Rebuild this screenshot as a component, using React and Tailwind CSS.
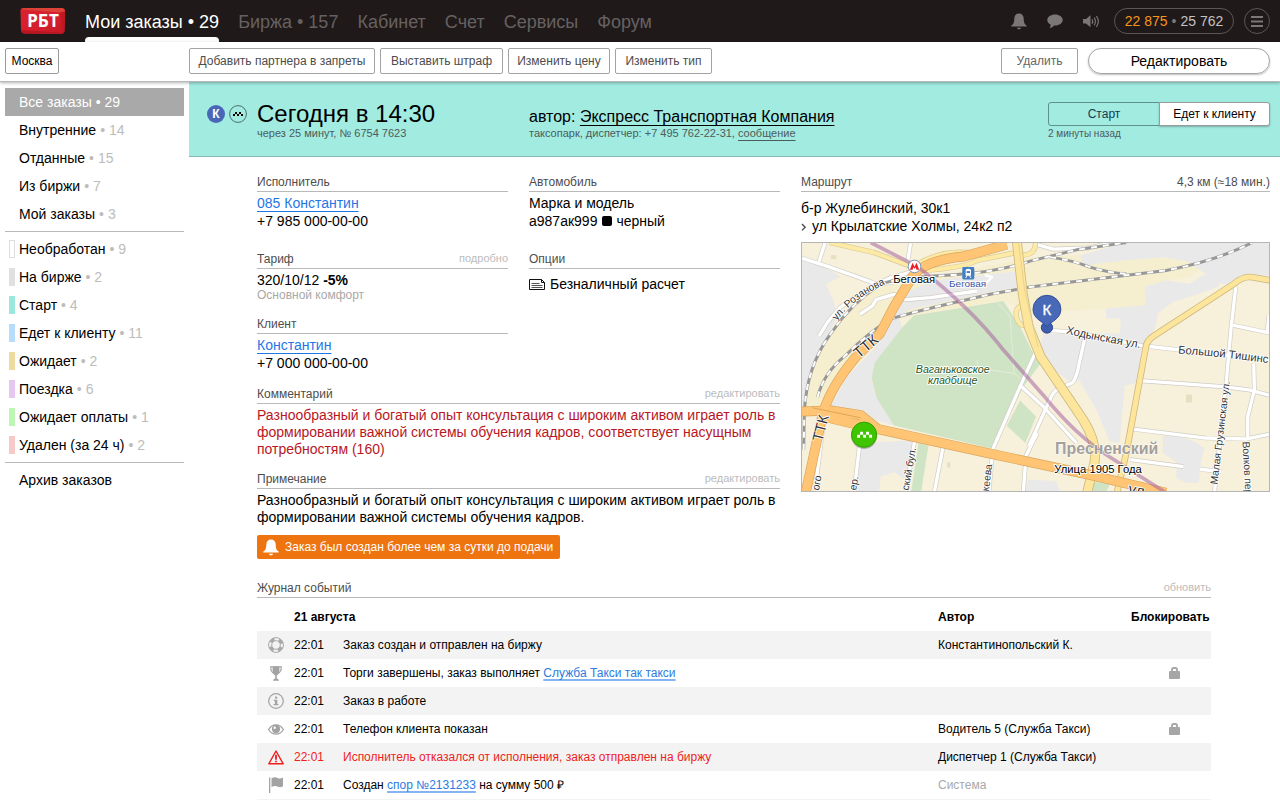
import { useState } from 'react'
import clsx from 'clsx'

const NAV = ['Мои заказы • 29', 'Биржа • 157', 'Кабинет', 'Счет', 'Сервисы', 'Форум']

const ACTIONS = [
  { label: 'Добавить партнера в запреты', width: 'w-[186px]' },
  { label: 'Выставить штраф', width: 'w-[123px]' },
  { label: 'Изменить цену', width: 'w-[102px]' },
  { label: 'Изменить тип', width: 'w-[97px]' },
]

const FOLDERS = [
  { label: 'Все заказы', count: 29 },
  { label: 'Внутренние', count: 14 },
  { label: 'Отданные', count: 15 },
  { label: 'Из биржи', count: 7 },
  { label: 'Мой заказы', count: 3 },
]

const STATUSES = [
  { label: 'Необработан', count: 9, color: 'border border-[#dedede] bg-white' },
  { label: 'На бирже', count: 2, color: 'bg-[#e0e0e0]' },
  { label: 'Старт', count: 4, color: 'bg-[#9de8de]' },
  { label: 'Едет к клиенту', count: 11, color: 'bg-[#b8dcfc]' },
  { label: 'Ожидает', count: 2, color: 'bg-[#eddb9f]' },
  { label: 'Поездка', count: 6, color: 'bg-[#e6c7f2]' },
  { label: 'Ожидает оплаты', count: 1, color: 'bg-[#bdf7b4]' },
  { label: 'Удален (за 24 ч)', count: 2, color: 'bg-[#f8c9c9]' },
]

const LOG_LINK = 'text-[#2b7be0] underline decoration-[#86b4f2] decoration-2 underline-offset-[2px] [text-decoration-skip-ink:none]'

const EVENTS = [
  { icon: LifebuoyIcon, text: 'Заказ создан и отправлен на биржу', author: 'Константинопольский К.' },
  {
    icon: CupIcon,
    text: <>Торги завершены, заказ выполняет <a href="#service" className={LOG_LINK}>Служба Такси так такси</a></>,
    lock: true,
  },
  { icon: InfoIcon, text: 'Заказ в работе' },
  { icon: EyeIcon, text: 'Телефон клиента показан', author: 'Водитель 5 (Служба Такси)', lock: true },
  {
    icon: WarningIcon,
    text: 'Исполнитель отказался от исполнения, заказ отправлен на биржу',
    author: 'Диспетчер 1 (Служба Такси)',
    danger: true,
  },
  {
    icon: FlagIcon,
    text: <>Создан <a href="#dispute" className={LOG_LINK}>спор №2131233</a> на сумму 500 ₽</>,
    author: 'Система',
    system: true,
  },
]

/* ---------- icons ---------- */

function Logo() {
  return (
    <svg width="46" height="28" viewBox="0 0 46 28" aria-label="РБТ">
      <defs>
        <linearGradient id="logoRed" x1="0" y1="0" x2="1" y2="1">
          <stop offset="0" stopColor="#d8232f" />
          <stop offset="0.6" stopColor="#d51f2c" />
          <stop offset="1" stopColor="#c21824" />
        </linearGradient>
      </defs>
      <path d="M.5 3Q.5 1 3 1L41 1Q45 1 45 4L44.500 24Q44 27 40 27L5 26.500Q1 26.500 1 23Z" fill="url(#logoRed)" />
      <path d="M3 1L41 1Q45 1 45 4.500L40 5.500L2 2.500Z" fill="#dc4238" />
      <path d="M40 5.500L45 4.500L44.500 24Q44 27 40 27L42 23Z" fill="#c01823" />
      <path d="M1 23L41 25.500L40 27L5 26.500Q1.500 26.500 1 23Z" fill="#b81622" />
      <text x="23" y="20" textAnchor="middle" fontSize="17" fontWeight="700" fill="#fff" fontFamily="Noto Sans, sans-serif">РБТ</text>
    </svg>
  )
}

function BellIcon({ className }) {
  return (
    <svg width="16" height="17" viewBox="0 0 16 17" fill="currentColor" className={className}>
      <path d="M8 .5C5 .5 3.400 2.600 3.300 5.500C3.200 9.500 2.600 11 .3 12.600V13.500H15.700V12.600C13.400 11 12.800 9.500 12.700 5.500C12.600 2.600 11 .5 8 .5Z" />
      <path d="M6 14.700H10C9.800 15.800 9 16.300 8 16.300S6.200 15.800 6 14.700Z" />
    </svg>
  )
}

function ChatIcon() {
  return (
    <svg width="16" height="15" viewBox="0 0 16 15" fill="currentColor">
      <path d="M8 .5C3.700 .5 .3 2.900 .3 6C.3 8 1.600 9.600 3.600 10.600C3.700 12 3.200 13.300 2.400 14.300C4.600 13.900 6.100 12.800 7 11.500C12 11.800 15.700 9.300 15.700 6C15.700 2.900 12.300 .5 8 .5Z" />
    </svg>
  )
}

function SoundIcon() {
  return (
    <svg width="17" height="13" viewBox="0 0 17 13">
      <path d="M0 4H3L7.500 .3V12.300L3 8.600H0Z" fill="currentColor" />
      <g fill="none" stroke="currentColor" strokeWidth="1.200">
        <path d="M9 4.300Q10.600 6.500 9 8.700" />
        <path d="M11.200 2.700Q13.800 6.500 11.200 10.300" />
        <path d="M13.400 1Q17.200 6.500 13.400 12" />
      </g>
    </svg>
  )
}

function MenuIcon() {
  return (
    <svg width="12" height="11" viewBox="0 0 12 11" stroke="currentColor" strokeWidth="2">
      <path d="M0 1H12M0 5.500H12M0 10H12" />
    </svg>
  )
}

function ClassBadge() {
  return (
    <svg width="18" height="18" viewBox="0 0 18 18">
      <circle cx="9" cy="9" r="9" fill="#4a67b7" />
      <text x="9" y="13" textAnchor="middle" fontSize="12" fontWeight="700" fill="#fff">К</text>
    </svg>
  )
}

function TaxiBadge() {
  return (
    <svg width="18" height="18" viewBox="0 0 18 18">
      <circle cx="9" cy="9" r="8.400" fill="none" stroke="#4d6f6b" />
      <path d="M6 7h2v2h-2zM10 7h2v2h-2zM4 9h2v2h-2zM8 9h2v2h-2zM12 9h2v2h-2z" fill="#000" />
    </svg>
  )
}

function BillIcon() {
  return (
    <svg width="16" height="11" viewBox="0 0 16 11" fill="none" stroke="#111">
      <path d="M.5 .5H12.500L15.500 3.500V10.500H.5Z" />
      <path d="M12.500 .5V3.500H15.500" />
      <path d="M2.500 4.500H10.500M2.500 6.500H13.500M2.500 8.500H13.500" stroke="#555" />
    </svg>
  )
}

function LifebuoyIcon() {
  return (
    <svg width="16" height="16" viewBox="0 0 16 16" fill="none" stroke="#a8a8a8">
      <circle cx="8" cy="8" r="7.400" />
      <circle cx="8" cy="8" r="4.300" />
      <circle cx="8" cy="8" r="5.900" strokeWidth="3.200" strokeDasharray="4.600 4.667" strokeDashoffset="-2.300" />
    </svg>
  )
}

function CupIcon() {
  return (
    <svg width="12" height="15" viewBox="0 0 12 15">
      <path d="M2.600 1H9.400C9.600 5.500 9.200 8 6.800 9.500V12.500C7.800 12.700 8.800 13.300 9 14.700H3C3.200 13.300 4.200 12.700 5.200 12.500V9.500C2.800 8 2.400 5.500 2.600 1Z" fill="#a3a3a3" />
      <path d="M.5 .7H11.500" fill="none" stroke="#a3a3a3" strokeWidth="1.200" />
      <path d="M.8 .8C.6 4 1.200 6 3.800 7.500M11.200 .8C11.400 4 10.800 6 8.200 7.500" fill="none" stroke="#a3a3a3" strokeWidth="1.200" />
    </svg>
  )
}

function InfoIcon() {
  return (
    <svg width="16" height="16" viewBox="0 0 16 16" fill="#a3a3a3">
      <circle cx="8" cy="8" r="7.300" fill="none" stroke="#a3a3a3" strokeWidth="1.200" />
      <rect x="6.900" y="3.500" width="2.400" height="2.200" rx="1" />
      <path d="M5.800 6.700H9.300V11H10.400V12.200H5.700V11H6.900V7.900H5.800Z" />
    </svg>
  )
}

function EyeIcon() {
  return (
    <svg width="16" height="11" viewBox="0 0 16 11">
      <path d="M.6 5.500C2.500 2.300 5 .8 8 .8S13.500 2.300 15.400 5.500C13.500 8.700 11 10.200 8 10.200S2.500 8.700 .6 5.500Z" fill="#fff" stroke="#a3a3a3" strokeWidth="1.300" />
      <circle cx="8" cy="5" r="4.200" fill="#a3a3a3" />
      <circle cx="6.700" cy="3.700" r="1.200" fill="#fff" />
    </svg>
  )
}

function WarningIcon() {
  return (
    <svg width="16" height="15" viewBox="0 0 16 15" fill="none" stroke="#f01d1d" strokeLinejoin="round">
      <path d="M8 1L15.200 13.800H.8Z" strokeWidth="1.400" />
      <path d="M8 4.800V9.800M8 10.800V12.300" strokeWidth="1.800" />
    </svg>
  )
}

function FlagIcon() {
  return (
    <svg width="16" height="16" viewBox="0 0 16 16" fill="#a3a3a3">
      <rect x="1" y=".5" width="1.300" height="15.500" />
      <path d="M3.500 1.200C6 0 8 .2 9.500 1C11.200 1.900 13 1.600 15 .6V9.300C13 10.300 11.200 10.500 9.500 9.600C8 8.800 6 8.700 3.500 9.900Z" />
    </svg>
  )
}

function LockIcon() {
  return (
    <svg width="11" height="12" viewBox="0 0 11 12">
      <rect y="4" width="11" height="8" rx="1" fill="#a6a6a6" />
      <path d="M3 5V2.800Q3 1 4.500 1H6.500Q8 1 8 2.800V5" fill="none" stroke="#a6a6a6" strokeWidth="1.800" />
    </svg>
  )
}

function ArrowIcon() {
  return (
    <svg width="6" height="18" viewBox="0 0 6 18" fill="none" stroke="#444" strokeWidth="1.300">
      <path d="M1 7L4.200 10.200L1 13.400" />
    </svg>
  )
}

/* ---------- map ---------- */

const WHITE_ROADS = [
  'M33 293L110 318L200 350L260 372L310 365',
  'M84 528L110 486L150 440L232 384L300 352L360 335',
  'M102 248L84 304',
  'M360 248L352 300',
  'M208 462L246 436L256 418L310 402L345 418L420 412L560 392',
  'M735 580L690 680L608 868L596 996',
  'M690 676L760 740L860 850',
  'M458 862L432 996',
  'M372 845L346 996',
  'M206 862L190 996',
  'M96 800L72 996',
  'M742 820L708 888L700 996',
  'M740 252L790 266L900 262L960 248',
  'M780 511L850 515L1060 557L1165 569L1440 600',
  'M885 535L868 610Q858 668 840 672Q796 686 786 706L716 860',
  'M1340 380L1326 500L1312 660L1276 996',
  'M1330 495L1440 518',
  'M1440 465L1434 520',
  'M1060 663L1300 680L1380 690L1440 706',
  'M1394 610L1396 690L1376 770L1376 836',
  'M1030 808L1250 835L1370 838L1440 824',
  'M1022 900L1182 921',
  'M1232 929L1296 936',
]

const YELLOW_ROADS = [
  'M116 246L250 276L372 322',
  'M380 312Q450 270 530 276Q600 282 640 252',
  'M400 330Q520 322 560 300L690 274',
  'M736 246Q738 286 690 284',
  'M700 434Q672 440 680 474Q690 506 716 490',
]

const RAILS = [
  'M38 870L40 760Q46 620 120 520Q180 430 270 372Q320 352 480 344Q620 336 720 302L860 268L1010 246',
  'M80 712Q98 640 160 590Q230 520 300 476Q380 452 460 434L600 402L720 380L900 358L1130 330Q1280 302 1390 246',
  'M780 290Q850 300 900 320Q960 338 1010 340',
]

const TTK = 'M650 252L520 288Q400 300 366 348L310 440L268 520L196 590Q120 680 96 760L44 1000'
const RING_EXIT = 'M33 755L120 752L210 766L262 808L610 884L900 946L1130 1000'
const GRUZINSKY_VAL = 'M1445 360L1385 350Q1360 348 1335 370L1092 528Q1070 542 1068 566L1010 880L982 1000'
const ZVENIGORODSKOE = 'M680 240L698 400L716 500L752 590L880 780Q924 850 914 910L892 1000'

function RouteMap() {
  return (
    <svg
      viewBox="33 246 1407 750"
      preserveAspectRatio="xMidYMid slice"
      className="mt-[7px] block h-[250px] w-full border border-[#b5b5b5]"
      role="img"
      aria-label="Карта маршрута"
    >
      <defs>
        <path id="rozanova" d="M138 482Q190 410 300 364" />
        <path id="hodynskaya" d="M828 520Q930 545 1090 570" />
        <path id="tishinskaya" d="M1166 580Q1300 590 1460 612" />
      </defs>
      <rect x="0" y="200" width="1500" height="850" fill="#f7f0db" />

      {/* railway corridor */}
      <path d="M40 760Q46 620 120 520L180 430L270 372L480 340L720 290L870 285L1000 298L1180 290L1250 310L1200 350L1130 360L1065 380L1070 435L948 445L730 460L640 420L370 465L300 480L200 590L110 730Z" fill="#f5efcf" />

      {/* industrial blocks */}
      <g fill="#e9e9ea">
        <path d="M33 296L120 330L150 348L105 372L128 420L140 470L70 600L44 740L33 740Z" />
        <path d="M325 472L336 505L262 600L243 660L256 712L310 798L225 770L120 738L170 650L255 560L305 482Z" />
        <path d="M430 360L690 332L700 376L560 404L350 450L330 470L300 470L340 400Z" />
        <path d="M206 850L378 842L350 962L310 938L270 950L265 996H186Z" />
        <path d="M870 285L1010 246H1440V345L1380 348L1320 375L1290 368L1286 380L1200 410L1150 425L1105 460L1100 495L1078 540L1062 660L1005 678L990 850L960 845L920 750L868 660L846 670L780 620L750 560L760 520L990 520L994 475L950 475L948 445L1070 435L1065 380L1130 360L1200 370L1250 340L1190 302L1120 290L1000 300L880 315Z" />
        <path d="M1120 828L1160 826L1212 845L1245 865L1236 900L1228 970L1190 970L1160 955L1162 908L1120 880Z" />
        <path d="M715 960L800 965L810 996H705Z" />
      </g>

      {/* parks */}
      <g fill="#cfe3c5">
        <path d="M335 502L370 466L640 422L690 500L730 580L760 600L700 680L610 868L500 842L310 797L258 715L243 655L252 608Z" />
        <path d="M690 722L738 770L706 850L650 798Z" />
        <path d="M384 850L414 858L392 996H362Z" />
        <path d="M905 965L960 975L950 996H900Z" />
      </g>
      <path d="M625 430L660 470L672 640L690 655M560 600L565 625L672 640" fill="none" stroke="#e3eddc" strokeWidth="3" />
      <g fill="#e8dfc3">
        <rect x="1190" y="704" width="18" height="24" />
        <rect x="120" y="284" width="16" height="12" />
        <rect x="470" y="908" width="10" height="16" />
      </g>

      <g fill="none" strokeLinejoin="round">
        {WHITE_ROADS.map((d) => <path key={d} d={d} stroke="#cfcdc6" strokeWidth="14" />)}
        {WHITE_ROADS.map((d) => <path key={d} d={d} stroke="#fff" strokeWidth="10" />)}
        <path d="M560 368L590 366L606 350L584 344" stroke="#fff" strokeWidth="7" />

        {RAILS.map((d) => <path key={d} d={d} stroke="#979797" strokeWidth="9" />)}
        {RAILS.map((d) => <path key={d} d={d} stroke="#fff" strokeWidth="6" strokeDasharray="18 18" />)}

        {YELLOW_ROADS.map((d) => <path key={d} d={d} stroke="#d9c992" strokeWidth="16" />)}
        {YELLOW_ROADS.map((d) => <path key={d} d={d} stroke="#fdeaa6" strokeWidth="12" />)}

        <path d={GRUZINSKY_VAL} stroke="#cdb980" strokeWidth="20" />
        <path d={GRUZINSKY_VAL} stroke="#fde69b" strokeWidth="15" />
        <path d={ZVENIGORODSKOE} stroke="#cdb980" strokeWidth="30" />
        <path d={ZVENIGORODSKOE} stroke="#fde69b" strokeWidth="25" />
        <path d="M686 250L704 390L744 560" stroke="#dcc988" strokeWidth="2" />

        <path d={TTK} stroke="#dba55c" strokeWidth="30" />
        <path d={RING_EXIT} stroke="#dba55c" strokeWidth="30" />
        <path d="M100 770L200 794L262 808" stroke="#dba55c" strokeWidth="32" />
        <path d={TTK} stroke="#ffc575" strokeWidth="26" />
        <path d={RING_EXIT} stroke="#ffc575" strokeWidth="26" />
        <path d="M100 770L200 794L262 808" stroke="#ffc575" strokeWidth="28" />
        <path d="M64 744L210 774" stroke="#c9964f" strokeWidth="2" />

        {/* metro line */}
        <path d="M240 246L380 318Q540 440 640 570L760 706Q860 830 960 892L1130 1000" stroke="#a8649f" strokeOpacity="0.55" strokeWidth="11" />
      </g>

      {/* street names */}
      <g fill="#333" stroke="#fff" strokeWidth="5" strokeLinejoin="round" paintOrder="stroke" fontSize="31">
        <text><textPath href="#rozanova">ул. Розанова</textPath></text>
        <text fontSize="34"><textPath href="#hodynskaya">Ходынская ул.</textPath></text>
        <text fontSize="34"><textPath href="#tishinskaya">Большой Тишинс</textPath></text>
        <text fontSize="45" transform="translate(204 596) rotate(-40)">ТТК</text>
        <text fontSize="45" transform="translate(94 848) rotate(-76)">ТТК</text>
        <text transform="translate(84 994) rotate(-80)">ого</text>
        <text transform="translate(196 994) rotate(-80)">ер.</text>
        <text transform="translate(354 994) rotate(-80)">ский бул.</text>
        <text transform="translate(596 996) rotate(-83)">кеева</text>
        <text transform="translate(1284 976) rotate(-83)">Малая Грузинская ул.</text>
        <text transform="translate(1360 846) rotate(87)">Волков пер</text>
        <text fontSize="46" transform="translate(1014 1002) rotate(12)">ул.</text>
      </g>

      {/* places */}
      <g textAnchor="middle" stroke="#fff" strokeWidth="6" strokeLinejoin="round" paintOrder="stroke">
        <text x="371" y="369" fontSize="34" fill="#000">Беговая</text>
        <text x="532" y="381" fontSize="30" fill="#3b55a3">Беговая</text>
        <text x="487" y="639" fontSize="32" fontStyle="italic" fill="#1c5a2b">Ваганьковское</text>
        <text x="487" y="671" fontSize="32" fontStyle="italic" fill="#1c5a2b">кладбище</text>
        <text x="951" y="882" fontSize="48" fontWeight="700" fill="#a3a09b" strokeWidth="3">Пресненский</text>
        <text x="925" y="941" fontSize="34" fill="#000">Улица 1905 Года</text>
      </g>

      {/* metro and train stations */}
      <circle cx="372" cy="318" r="19" fill="#fff" stroke="#7d92b8" strokeWidth="3" />
      <path d="M358 328L366 307L372 319L378 307L386 328H378L375 320L372 326L369 320L366 328Z" fill="#ec1c24" />
      <rect x="516" y="320" width="36" height="37" rx="4" fill="#3f7fc4" />
      <path d="M526 328Q534 322 542 328V346H526Z" fill="#fff" />
      <path d="M529 332H539V338H529Z" fill="#3f7fc4" />
      <path d="M526 353L530 346M542 353L538 346" stroke="#fff" strokeWidth="3" />

      {/* car */}
      <circle cx="220" cy="829" r="39" fill="#000" opacity="0.25" />
      <circle cx="220" cy="825" r="38" fill="#3fc400" stroke="#2f9e00" strokeWidth="3" />
      <path d="M208 816h9v9h-9zM226 816h9v9h-9zM199 825h9v9h-9zM217 825h9v9h-9zM235 825h9v9h-9z" fill="#fff" />

      {/* client */}
      <circle cx="771" cy="502" r="17" fill="#3c5cae" stroke="#2c458c" strokeWidth="3" />
      <path d="M771 500C762 484 729 478 729 447A42 42 0 0 1 813 447C813 478 780 484 771 500Z" fill="#4868b8" stroke="#34509b" strokeWidth="3" />
      <text x="771" y="463" textAnchor="middle" fontSize="45" fill="#fff" stroke="#fff" strokeWidth="1">К</text>
    </svg>
  )
}

/* ---------- layout ---------- */

function Header() {
  const [active, setActive] = useState(0)

  return (
    <header className="flex h-[42px] items-center bg-[#1f1919] pr-[10px] pl-5">
      <Logo />
      <nav className="ml-[19px] flex h-full flex-1 gap-[19px] text-lg">
        {NAV.map((label, i) => (
          <a
            key={label}
            href="#nav"
            onClick={() => setActive(i)}
            className={clsx('flex flex-col pt-2 whitespace-nowrap', active === i ? 'text-white' : 'text-[#666161]')}
          >
            <span className="leading-7">{label}</span>
            {active === i && <span className="mt-px h-[5px] rounded-t bg-white" />}
          </a>
        ))}
      </nav>
      <div className="flex items-center text-[#7b7777]">
        <button type="button" aria-label="Уведомления" className="mr-5"><BellIcon /></button>
        <button type="button" aria-label="Сообщения" className="mr-5"><ChatIcon /></button>
        <button type="button" aria-label="Звук" className="mr-[14px]"><SoundIcon /></button>
        <a href="#balance" className="flex h-[26px] w-[120px] items-center justify-center rounded-full border border-[#5c5757] text-sm">
          <span className="text-[#f7941d]">22 875</span>
          <span className="mx-1 text-[#7b7777]">•</span>
          <span className="text-[#c4c2c2]">25 762</span>
        </a>
        <button type="button" aria-label="Меню" className="ml-[10px] flex size-[26px] items-center justify-center rounded-full border border-[#5c5757]">
          <MenuIcon />
        </button>
      </div>
    </header>
  )
}

function Toolbar() {
  return (
    <div className="relative z-10 flex h-10 items-start border-b border-[#b9b9b9] bg-white pt-[6px] pr-[10px] pl-[5px] text-xs shadow-[0_1px_3px_rgba(0,0,0,0.3)]">
      <div className="w-[184px]">
        <button type="button" className="h-[26px] w-[54px] rounded-xs border border-[#9b9b9b] text-black">Москва</button>
      </div>
      <div className="flex flex-1 gap-[5px]">
        {ACTIONS.map(({ label, width }) => (
          <button key={label} type="button" className={clsx('h-[26px] rounded-xs border border-[#a3a3a3] whitespace-nowrap text-[#4d4d4d]', width)}>
            {label}
          </button>
        ))}
      </div>
      <button type="button" className="mr-[10px] h-[26px] w-[77px] rounded-xs border border-[#a3a3a3] text-[#666]">Удалить</button>
      <button type="button" className="h-[26px] w-[182px] rounded-full border border-[#a3a3a3] text-sm text-black shadow-[0_1px_2px_rgba(0,0,0,0.25)]">
        Редактировать
      </button>
    </div>
  )
}

function SidebarItem({ label, count, color, active }) {
  return (
    <li>
      <a
        href="#orders"
        className={clsx('flex h-7 items-center', active ? 'bg-[#a9a9a9] text-white' : 'text-black')}
      >
        <span className={clsx('mr-1 ml-1 h-[18px] w-[6px]', color)} />
        {label}
        {count !== undefined && <span className={clsx('ml-1', !active && 'text-[#bcbcbc]')}>• {count}</span>}
      </a>
    </li>
  )
}

function Sidebar() {
  return (
    <aside className="w-[189px] shrink-0 px-[5px] pt-[6px] text-sm">
      <ul>
        {FOLDERS.map((item, i) => <SidebarItem key={item.label} {...item} active={i === 0} />)}
      </ul>
      <hr className="mt-[3px] mb-[3px] border-[#b9b9b9]" />
      <ul>
        {STATUSES.map((item) => <SidebarItem key={item.label} {...item} />)}
      </ul>
      <hr className="mt-[3px] mb-[3px] border-[#b9b9b9]" />
      <ul>
        <SidebarItem label="Архив заказов" />
      </ul>
    </aside>
  )
}

function OrderBanner() {
  return (
    <div className="flex h-[75px] items-start border-b border-[#84b9b2] bg-[#a2ebe1] pr-[10px] pl-[18px]">
      <div className="flex gap-1 pt-[23px]">
        <ClassBadge />
        <TaxiBadge />
      </div>
      <div className="ml-[10px] w-[272px] pt-[19px]">
        <h1 className="text-2xl leading-[26px] text-black">Сегодня в 14:30</h1>
        <p className="text-[11px] leading-[13px] text-[#4c5c5a]">через 25 минут, № 6754 7623</p>
      </div>
      <div className="flex-1 pt-[25px]">
        <p className="text-base leading-5 text-black">
          автор:{' '}
          <a href="#author" className="underline decoration-1 underline-offset-[3px] [text-decoration-skip-ink:none]">Экспресс Транспортная Компания</a>
        </p>
        <p className="text-[11px] leading-[13px] text-[#4c5c5a]">
          таксопарк, диспетчер: +7 495 762-22-31,{' '}
          <a href="#message" className="underline decoration-1 underline-offset-[3px] [text-decoration-skip-ink:none]">сообщение</a>
        </p>
      </div>
      <div className="w-[222px] pt-5">
        <div className="flex h-6 text-xs">
          <button type="button" className="w-[112px] rounded-l-[3px] border border-[#5f918b] text-[#143a54]">Старт</button>
          <button type="button" className="-ml-px flex-1 rounded-r-[3px] border border-[#9b9b9b] bg-white text-black shadow-[0_1px_2px_rgba(0,0,0,0.25)]">Едет к клиенту</button>
        </div>
        <p className="pt-px text-[10px] leading-[14px] text-[#4c5c5a]">2 минуты назад</p>
      </div>
    </div>
  )
}

function Section({ title, action, note, className, children }) {
  return (
    <section className={className}>
      <div className="flex h-[18px] items-start justify-between border-b border-[#b9b9b9] text-xs leading-4">
        <h2 className="text-[#4d4d4d]">{title}</h2>
        {action && <button type="button" className="text-[11px] leading-[15px] text-[#bcbcbc]">{action}</button>}
        {note && <span className="text-[#4d4d4d]">{note}</span>}
      </div>
      {children}
    </section>
  )
}

function PersonLink({ children }) {
  return (
    <a href="#person" className="text-[#1f76e6] underline decoration-1 underline-offset-[3px] [text-decoration-skip-ink:none]">{children}</a>
  )
}

function OrderDetails() {
  return (
    <div className="w-[523px] shrink-0">
      <div className="flex gap-[21px] text-sm leading-[18px] text-black">
        <div className="flex-1">
          <Section title="Исполнитель">
            <div className="pt-[2px]">
              <p><PersonLink>085 Константин</PersonLink></p>
              <p>+7 985 000-00-00</p>
            </div>
          </Section>
          <Section title="Тариф" action="подробно" className="mt-[21px]">
            <div className="pt-[2px]">
              <p>320/10/12 <b>-5%</b></p>
              <p className="text-xs leading-[13px] text-[#a9a9a9]">Основной комфорт</p>
            </div>
          </Section>
          <Section title="Клиент" className="mt-[14px]">
            <div className="pt-[2px]">
              <p><PersonLink>Константин</PersonLink></p>
              <p>+7 000 000-00-00</p>
            </div>
          </Section>
        </div>
        <div className="flex-1">
          <Section title="Автомобиль">
            <div className="pt-[2px]">
              <p>Марка и модель</p>
              <p className="flex items-center">
                а987ак999
                <span className="mr-1 ml-[5px] size-[10px] rounded-xs bg-black" />
                черный
              </p>
            </div>
          </Section>
          <Section title="Опции" className="mt-[21px]">
            <p className="flex items-center gap-[5px] pt-[6px]">
              <BillIcon />
              Безналичный расчет
            </p>
          </Section>
        </div>
      </div>

      <Section title="Комментарий" action="редактировать" className="mt-[14px]">
        <p className="pt-[3px] text-sm leading-[17px] text-[#b8171f]">
          Разнообразный и богатый опыт консультация с широким активом играет роль в формировании важной системы обучения кадров, соответствует насущным потребностям (160)
        </p>
      </Section>
      <Section title="Примечание" action="редактировать" className="mt-[13px]">
        <p className="pt-[3px] text-sm leading-[17px] text-black">
          Разнообразный и богатый опыт консультация с широким активом играет роль в формировании важной системы обучения кадров.
        </p>
      </Section>

      <div className="mt-[9px] flex h-6 w-fit items-center rounded-xs bg-[#ed740f] pr-[7px] pl-[6px] text-xs text-white">
        <BellIcon className="mr-[6px]" />
        Заказ был создан более чем за сутки до подачи
      </div>
    </div>
  )
}

function EventLog() {
  return (
    <Section title="Журнал событий" action="обновить" className="mt-[21px] mr-[59px]">
      <table className="w-full table-fixed border-b border-[#f3f3f3] text-xs text-black">
        <colgroup>
          <col className="w-[37px]" />
          <col className="w-[49px]" />
          <col />
          <col className="w-[193px]" />
          <col className="w-[80px]" />
        </colgroup>
        <thead>
          <tr className="h-[33px] text-left">
            <th className="p-0" />
            <th colSpan={2} className="pt-1">21 августа</th>
            <th className="pt-1">Автор</th>
            <th className="pt-1">Блокировать</th>
          </tr>
        </thead>
        <tbody>
          {EVENTS.map(({ icon: Icon, text, author, lock, danger, system }, i) => (
            <tr key={i} className={clsx('h-7 odd:bg-[#f3f3f3]', danger && 'text-[#f01d1d]')}>
              <td className="p-0"><div className="flex justify-center"><Icon /></div></td>
              <td className="p-0">22:01</td>
              <td className="p-0">{text}</td>
              <td className={clsx('p-0', system ? 'text-[#a9a9a9]' : 'text-black')}>{author}</td>
              <td className="p-0 pl-[7px]">
                {lock && (
                  <button type="button" aria-label="Блокировать" className="flex w-full justify-center"><LockIcon /></button>
                )}
              </td>
            </tr>
          ))}
        </tbody>
      </table>
    </Section>
  )
}

function App() {
  return (
    <div className="min-h-screen bg-white font-['Liberation_Sans',Arial,sans-serif]">
      <Header />
      <Toolbar />
      <div className="flex">
        <Sidebar />
        <main className="min-w-0 flex-1">
          <OrderBanner />
          <div className="pt-[17px] pr-[10px] pl-[68px]">
            <div className="flex gap-[21px]">
              <OrderDetails />
              <Section title="Маршрут" note="4,3 км (≈18 мин.)" className="min-w-0 flex-1">
                <div className="pt-[7px] text-sm leading-[18px] text-black">
                  <p>б-р Жулебинский, 30к1</p>
                  <p className="flex gap-[5px]"><ArrowIcon />ул Крылатские Холмы, 24к2 п2</p>
                </div>
                <RouteMap />
              </Section>
            </div>
            <EventLog />
          </div>
        </main>
      </div>
    </div>
  )
}

export default App
